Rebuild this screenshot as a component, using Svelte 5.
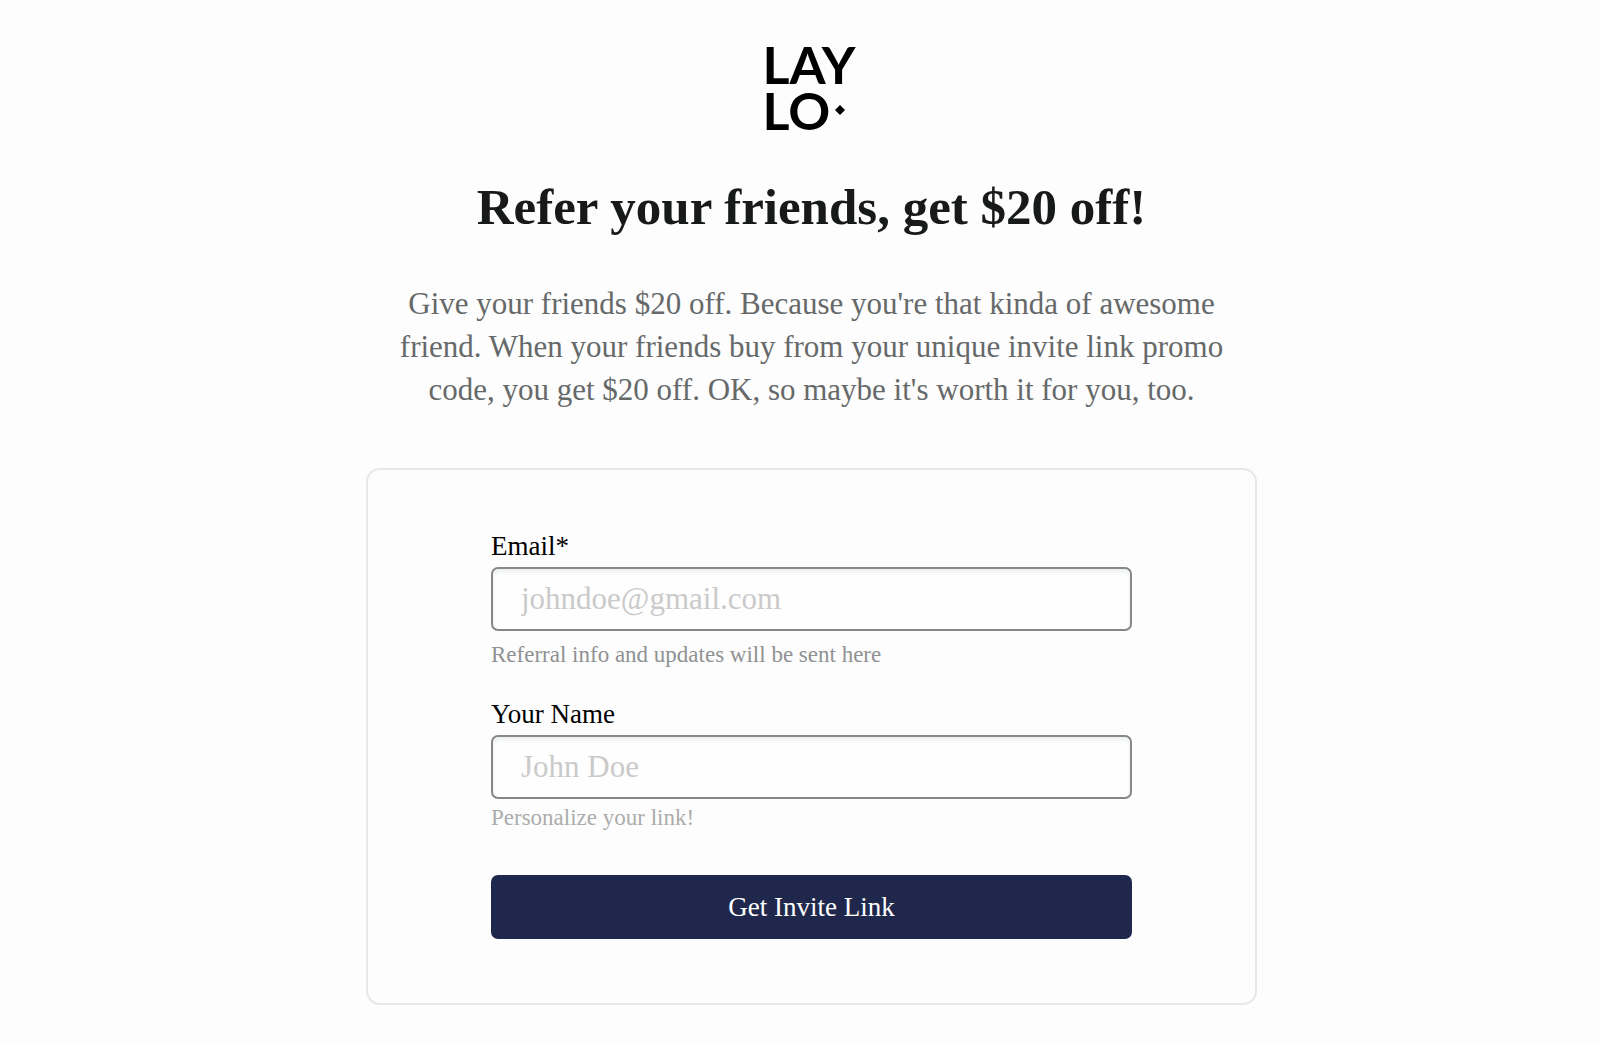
<script>
  let email = '';
  let name = '';

  function handleSubmit() {

  }
</script>

<main class="page">
  <div class="logo">
    <div class="logo-line">LAY</div>
    <div class="logo-line">
      LO
      <svg class="logo-dot" width="10" height="10" viewBox="0 0 10 10" aria-hidden="true">
        <path d="M5 0 L10 5 L5 10 L0 5 Z" fill="#000" />
      </svg>
    </div>
  </div>

  <h1>Refer your friends, get $20 off!</h1>

  <p class="intro">
    Give your friends $20 off. Because you're that kinda of awesome<br />
    friend. When your friends buy from your unique invite link promo<br />
    code, you get $20 off. OK, so maybe it's worth it for you, too.
  </p>

  <form class="card" on:submit|preventDefault={handleSubmit}>
    <label for="email">Email*</label>
    <input id="email" type="email" placeholder="johndoe@gmail.com" bind:value={email} />
    <p class="hint email-hint">Referral info and updates will be sent here</p>

    <label for="name">Your Name</label>
    <input id="name" type="text" placeholder="John Doe" bind:value={name} />
    <p class="hint name-hint">Personalize your link!</p>

    <button type="submit">Get Invite Link</button>
  </form>
</main>

<style>
  :global(body) {
    background: #fdfdfd;
  }

  .page {
    display: flex;
    flex-direction: column;
    align-items: center;
    padding: 41px 0 38px 23px;
    font-family: Georgia, 'Liberation Serif', serif;
  }

  .logo {
    width: 98px;
    color: #000;
    font-family: Lato, sans-serif;
    font-size: 52px;
    font-weight: 700;
    line-height: 46px;
  }

  .logo-line {
    display: flex;
    align-items: center;
    white-space: nowrap;
  }

  .logo-dot {
    margin-left: 5px;
  }

  h1 {
    margin: 42px 0 0;
    color: #181a1a;
    font-size: 51px;
    font-weight: 700;
    line-height: 64px;
    text-align: center;
  }

  .intro {
    margin: 43px 0 0;
    color: #666969;
    font-size: 31px;
    line-height: 43px;
    text-align: center;
  }

  .card {
    display: flex;
    flex-direction: column;
    box-sizing: border-box;
    width: 100%;
    max-width: 891px;
    margin-top: 57px;
    padding: 60px 123px 64px;
    border: 2px solid #e6e7e7;
    border-radius: 14px;
  }

  label {
    color: #000;
    font-size: 27px;
    line-height: 32px;
  }

  input {
    box-sizing: border-box;
    width: 100%;
    height: 64px;
    margin: 5px 0 0;
    padding: 0 28px;
    border: 2px solid #858888;
    border-radius: 7px;
    background: #fefefe;
    box-shadow: inset 0 3px 4px #edf0ef;
    color: #181a1a;
    font-family: inherit;
    font-size: 31px;
  }

  input::placeholder {
    color: #cacaca;
    opacity: 1;
  }

  .hint {
    margin: 0;
    font-size: 23px;
    line-height: 28px;
  }

  .email-hint {
    margin: 10px 0 29px;
    color: #8f9292;
  }

  .name-hint {
    margin: 5px 0 43px;
    color: #acacac;
  }

  button {
    width: 100%;
    height: 64px;
    padding: 0;
    border: none;
    border-radius: 7px;
    background: #1f284c;
    color: #fff;
    font-family: inherit;
    font-size: 27px;
    cursor: pointer;
  }
</style>
